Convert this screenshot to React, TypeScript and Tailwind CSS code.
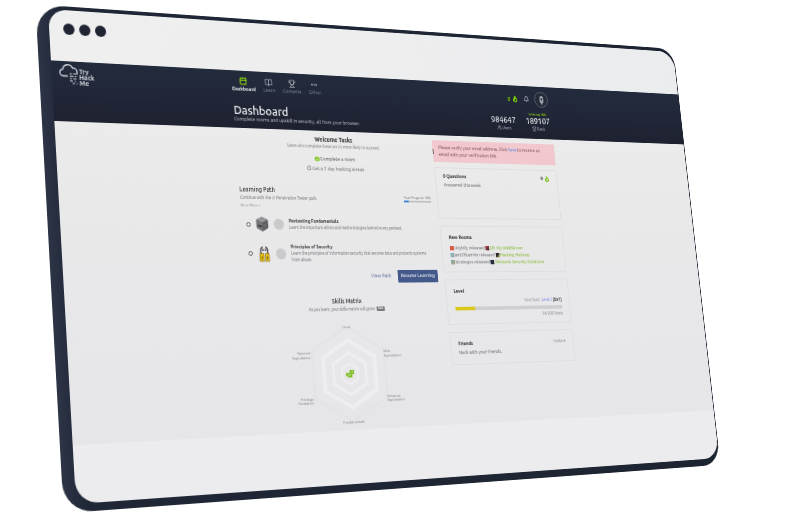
import { useLayoutEffect, useRef, useState } from "react";
import type { ReactNode } from "react";
import { Bell, BookOpen, Check, Clock, Ellipsis, Flame, PanelTop, Trophy, Users } from "lucide-react";

type Point = [number, number];

const CANVAS_WIDTH = 808;
const PLANE_WIDTH = 800;
const PLANE_HEIGHT = 500;

// Where the four corners of the tilted screen land, clockwise from top left.
const CORNERS: Point[] = [
  [48, 9],
  [673, 52],
  [719, 458],
  [76, 504],
];

// Perspective matrix that lays the flat screen onto the four corners.
function tilt(scale: number): string {
  const [[x0, y0], [x1, y1], [x2, y2], [x3, y3]] = CORNERS.map(
    ([x, y]) => [x * scale, y * scale] as Point,
  );
  const dx1 = x1 - x2;
  const dx2 = x3 - x2;
  const sx = x0 - x1 + x2 - x3;
  const dy1 = y1 - y2;
  const dy2 = y3 - y2;
  const sy = y0 - y1 + y2 - y3;
  const den = dx1 * dy2 - dx2 * dy1;
  const g = (sx * dy2 - dx2 * sy) / den;
  const h = (dx1 * sy - sx * dy1) / den;
  const w = PLANE_WIDTH;
  const t = PLANE_HEIGHT;
  const m = [
    (x1 - x0 + g * x1) / w, (y1 - y0 + g * y1) / w, 0, g / w,
    (x3 - x0 + h * x3) / t, (y3 - y0 + h * y3) / t, 0, h / t,
    0, 0, 1, 0,
    x0, y0, 0, 1,
  ];
  return `matrix3d(${m.map((n) => n.toFixed(9)).join(",")})`;
}

function Logo() {
  return (
    <a href="#home" className="flex items-end text-[#d5d9e0]" aria-label="Try Hack Me">
      <svg viewBox="0 0 44 44" className="-mr-0.5 h-11 w-11" fill="none" stroke="currentColor">
        <path d="M17 25H9a7 7 0 0 1-1-14 11 11 0 0 1 21-3 8 8 0 0 1 9 9v3" strokeWidth="2.6" strokeLinecap="round" />
        <path d="M22 20h5m3 0h6M22 25h8m3 0h3M22 30h4m3 0h7M22 35h6m4 0h2M27 40h5m3 0h2" strokeWidth="2.4" />
      </svg>
      <span className="flex flex-col text-[14px] leading-[12px] font-semibold">
        <span>Try</span>
        <span>Hack</span>
        <span>Me</span>
      </span>
    </a>
  );
}

function NavItem({ icon, label, active }: { icon: ReactNode; label: string; active?: boolean }) {
  return (
    <a
      href="#nav"
      className={
        active
          ? "flex flex-col items-center gap-0.5 font-semibold text-[#e6e8ec]"
          : "flex flex-col items-center gap-0.5 text-[#858b98]"
      }
    >
      {icon}
      <span className="text-[11px] leading-[14px]">{label}</span>
    </a>
  );
}

function Header() {
  return (
    <header className="bg-linear-to-b from-[#222b3c] via-[#212738] to-[#1e2130] text-white">
      <div className="relative pl-3">
        <div className="absolute top-1.5 left-4">
          <Logo />
        </div>
        <div className="mx-auto flex h-16 max-w-[816px] items-center justify-between">
          <nav className="flex gap-[18px]">
            <NavItem active label="Dashboard" icon={<PanelTop className="size-[18px] text-[#88cc14]" strokeWidth={3} />} />
            <NavItem label="Learn" icon={<BookOpen className="size-[18px] text-[#b3b8c2]" />} />
            <NavItem label="Compete" icon={<Trophy className="size-[18px] text-[#b3b8c2]" />} />
            <NavItem label="Other" icon={<Ellipsis className="size-[18px] text-[#b3b8c2]" strokeWidth={3} />} />
          </nav>
          <div className="flex items-center gap-4 pr-1">
            <span className="flex items-center gap-1 text-sm font-medium text-[#88e000]">
              0 <Flame className="size-4" strokeWidth={4} />
            </span>
            <button type="button" aria-label="Notifications">
              <Bell className="size-[15px] text-[#c3c7cf]" />
            </button>
            <button
              type="button"
              aria-label="Profile"
              className="flex size-[38px] items-center justify-center rounded-full border-2 border-[#5c6370] bg-[#252b39]"
            >
              <svg viewBox="0 0 20 24" className="h-6 w-5">
                <path d="M5 8a5 6 0 0 1 10 0v8a5 5 0 0 1-3 4v3H9v-3a5 5 0 0 1-4-4z" fill="#a9adb5" />
                <path d="M8 8h4v4H8zM9 15h4" fill="#2b303c" stroke="#2b303c" />
              </svg>
            </button>
          </div>
        </div>
      </div>
      <div className="pl-3">
        <div className="mx-auto flex h-[63px] max-w-[816px] justify-between">
          <div className="pt-2">
            <h1 className="text-[26px] leading-[28px] font-medium text-[#eef0f3]">Dashboard</h1>
            <p className="text-[11px] leading-[14px] text-[#c3c6ce]">
              Complete rooms and upskill in security, all from your browser.
            </p>
          </div>
          <div className="flex gap-7 pr-1 text-center">
            <div className="pt-2">
              <div className="text-[20px] leading-[22px] font-medium text-[#e6e8ec]">984647</div>
              <div className="flex items-center justify-center gap-0.5 text-[10px] leading-[18px] text-[#b3b8c2]">
                <Users className="size-3" /> Users
              </div>
            </div>
            <div>
              <div className="text-[7px] leading-[8px] font-semibold text-[#88cc14]">In the top 18%</div>
              <div className="text-[20px] leading-[22px] font-medium text-[#e6e8ec]">189107</div>
              <div className="flex items-center justify-center gap-0.5 text-[10px] leading-[18px] text-[#b3b8c2]">
                <Trophy className="size-3" /> Rank
              </div>
            </div>
          </div>
        </div>
      </div>
    </header>
  );
}

function WelcomeTasks() {
  return (
    <section className="flex flex-col items-center">
      <h2 className="text-[13px] leading-4 font-semibold text-[#202024]">Welcome Tasks</h2>
      <p className="text-[9px] leading-4 text-[#77777c]">Users who complete these are 2x more likely to succeed.</p>
      <p className="mt-3 flex items-center gap-0.5 text-[11px] leading-[14px] text-[#48484d]">
        <span className="flex size-[11px] items-center justify-center rounded-full bg-[#7cc51c]">
          <Check className="size-2 text-white" strokeWidth={4} />
        </span>
        Complete a room
      </p>
      <p className="mt-[7px] flex items-center gap-0.5 text-[11px] leading-[14px] text-[#66666b]">
        <Clock className="size-[11px]" /> Get a 2 day hacking streak
      </p>
    </section>
  );
}

function Cube() {
  return (
    <svg viewBox="0 0 30 32" className="h-8 w-[30px]">
      <path d="M15 1 28 7 15 13 2 7z" fill="#98989c" />
      <path d="M2 7 15 13V31L2 24z" fill="#77777b" />
      <path d="M28 7 15 13V31L28 24z" fill="#616165" />
      <path d="M15 1 28 7V24L15 31 2 24V7zM2 7l13 6 13-6M15 13v18" fill="none" stroke="#4b4b50" />
      <path d="M5 15v7l2-3 2 5v-7l-2 2zM10 18l3 1v4l-3-1z" fill="#29292d" />
      <path d="M18 18l3-1v3M22 22l3-2" fill="none" stroke="#86868a" />
    </svg>
  );
}

function Padlocks() {
  return (
    <svg viewBox="0 0 30 36" className="h-9 w-[30px]">
      <path d="M7 20V9q1-5 5-6M23 20V9q-1-5-5-6M12 12V7M18 12V7" fill="none" stroke="#4a4a4e" strokeWidth="3" />
      <path d="M4 17h10v17H4zM17 17h9v17h-9z" fill="#e4bd16" stroke="#6e5c1b" />
      <path d="M9 23v6M21 23v6" stroke="#54481e" strokeWidth="2" />
    </svg>
  );
}

function PathStep({ icon, title, children }: { icon: ReactNode; title: string; children: ReactNode }) {
  return (
    <li className="flex items-center gap-3 pl-2.5">
      <span className="size-2.5 shrink-0 rounded-full border border-[#5b5b60]" />
      <span className="flex h-8 shrink-0 items-center">{icon}</span>
      <span className="size-6 shrink-0 rounded-full bg-[#c9cacc]" />
      <div className="pr-5 leading-[14px]">
        <h3 className="text-[10px] font-semibold text-[#303034]">{title}</h3>
        <p className="text-[9px] text-[#69696e]">{children}</p>
      </div>
    </li>
  );
}

function LearningPath() {
  return (
    <section className="mt-[34px]">
      <div className="flex items-start justify-between">
        <div>
          <h2 className="text-[13px] leading-4 font-medium text-[#2b2b2f]">Learning Path</h2>
          <p className="text-[9px] leading-5 text-[#69696e]">Continue with the Jr Penetration Tester path.</p>
          <a href="#more" className="block text-[8px] leading-[10px] text-[#85858a]">
            Show More &gt;
          </a>
        </div>
        <div className="pt-3.5">
          <div className="text-[8px] leading-[12px] text-[#5e5e63]">Your Progress: 18%</div>
          <div className="h-[5px] bg-[#bfc1c6]">
            <div className="h-full w-1/6 bg-[#2b7de0]" />
          </div>
        </div>
      </div>
      <ul className="mt-[21px] flex flex-col gap-[26px]">
        <PathStep icon={<Cube />} title="Pentesting Fundamentals">
          Learn the important ethics and methodologies behind every pentest.
        </PathStep>
        <PathStep icon={<Padlocks />} title="Principles of Security">
          Learn the principles of information security that secures data and protects systems from abuse.
        </PathStep>
      </ul>
      <div className="mt-[15px] flex items-center justify-end gap-4">
        <a href="#path" className="text-[11px] text-[#4c6191]">
          View Path
        </a>
        <button type="button" className="h-7 rounded-xs bg-[#43598a] px-2 text-[11px] font-medium text-[#e6e9f0]">
          Resume Learning
        </button>
      </div>
    </section>
  );
}

function SkillsMatrix() {
  return (
    <section className="mt-8 flex flex-col items-center">
      <h2 className="text-[13px] leading-4 font-medium text-[#202024]">Skills Matrix</h2>
      <p className="flex items-center gap-1 text-[9px] leading-5 text-[#69696e]">
        As you learn, your skills matrix will grow
        <span className="rounded-xs bg-[#77777c] px-1 text-[7px] leading-[10px] font-bold text-[#ededee]">Info</span>
      </p>
      <svg viewBox="-30 0 300 224" className="mt-[18px] mr-3 h-[224px] w-[300px]" fontSize="8" fill="#77777c">
        <g fill="none" stroke="#eeedef" strokeWidth="9">
          <path d="M120 9 207 59V161L120 211 33 161V59z" stroke="#e4e3e5" strokeWidth="6" />
          <path d="M120 38 182 74V146L120 182 58 146V74z" />
          <path d="M120 65 159 88V132L120 155 81 132V88z" strokeWidth="7" />
          <path d="M120 88 139 99V121L120 132 101 121V99z" strokeWidth="5" />
        </g>
        <path d="M112 108h7v-6h11v9h-5v7h-11v-3h-4v-7z" fill="#83bf2d" />
        <path d="M115 112h6m3-6h3" stroke="#dff0c2" strokeWidth="2" />
        <text x="120" y="12" textAnchor="middle">Linux</text>
        <text x="206" y="67">Web</text>
        <text x="206" y="76">Exploitation</text>
        <text x="206" y="164">Windows</text>
        <text x="206" y="173">Exploitation</text>
        <text x="120" y="216" textAnchor="middle">Fundamentals</text>
        <text x="29" y="164" textAnchor="end">Privilege</text>
        <text x="29" y="173" textAnchor="end">Escalation</text>
        <text x="29" y="67" textAnchor="end">Network</text>
        <text x="29" y="76" textAnchor="end">Exploitation</text>
      </svg>
    </section>
  );
}

function Alert() {
  return (
    <div className="relative bg-[#f1c8ce] px-4 py-2.5 text-[11px] leading-[15px] text-[#77434c]">
      <span className="absolute top-5 left-0 h-3 w-0.5 bg-[#54333b]" />
      Please verify your email address. Click{" "}
      <a href="#verify" className="text-[#3f83ee]">
        here
      </a>{" "}
      to receive an
      <br />
      email with your verification link.
    </div>
  );
}

function NewRoom({ user, room, from, to }: { user: string; room: string; from: string; to: string }) {
  return (
    <li className="flex items-center gap-0.5">
      <span className={"size-2.5 " + from} />
      <span>{user} released</span>
      <span className={"size-2.5 " + to} />
      <a href="#room" className="text-[#79b51c]">
        {room}
      </a>
    </li>
  );
}

function Sidebar() {
  const card = "rounded-xs border border-[#dedee0] px-5";
  const title = "text-[11px] leading-4 font-semibold text-[#252529]";
  return (
    <aside className="w-[333px] pt-3">
      <Alert />
      <div className="mt-3 flex flex-col gap-[17px]">
        <section className={card + " h-[117px] pt-2.5"}>
          <div className="flex items-center justify-between">
            <h2 className={title}>0 Questions</h2>
            <span className="flex items-center gap-1 text-[12px] leading-4 font-semibold text-[#252529]">
              0 <Flame className="size-3.5 text-[#7cc51c]" strokeWidth={4} />
            </span>
          </div>
          <p className="mt-1 text-[11px] leading-4 text-[#5b5b60]">Answered this week</p>
        </section>
        <section className={card + " h-[105px] pt-4"}>
          <h2 className={title}>New Rooms</h2>
          <ul className="mt-2 text-[11px] leading-4 text-[#66666b]">
            <NewRoom user="tinyb0y" room="Oh My WebServer" from="bg-[#d8573f]" to="bg-linear-to-br from-[#cf3048] to-[#2b2530]" />
            <NewRoom user="am03bam4n" room="Hacking Hadoop" from="bg-[#92afb4]" to="bg-linear-to-br from-[#252529] from-40% to-[#cdbc2f]" />
            <NewRoom user="strategos" room="Network Security Solutions" from="bg-linear-to-br from-[#6eafae] to-[#b99c79]" to="bg-[#25293a]" />
          </ul>
        </section>
        <section className={card + " h-[101px] pt-4"}>
          <h2 className={title}>Level</h2>
          <p className="mt-1.5 text-right text-[9px] leading-4 text-[#939398]">
            Next Rank :{" "}
            <a href="#level" className="text-[#7477ee]">
              Level 2
            </a>{" "}
            <b className="text-[10px] text-[#303034]">[0x1]</b>
          </p>
          <div className="mt-1 h-2 bg-[#cdcfd2]">
            <div className="h-full w-[18%] bg-[#dac81c]" />
          </div>
          <p className="mt-1 text-right text-[9px] leading-4 text-[#85858a]">94/500 Points</p>
        </section>
        <section className={card + " h-[74px] pt-4"}>
          <div className="flex items-center justify-between">
            <h2 className={title}>Friends</h2>
            <button type="button" className="text-[10px] leading-4 text-[#85858a]">
              Invite ▾
            </button>
          </div>
          <p className="mt-1 text-[11px] leading-4 text-[#5b5b60]">Hack with your friends.</p>
        </section>
      </div>
    </aside>
  );
}

function Screen() {
  return (
    <div className="h-[1000px] overflow-hidden rounded-tl-[40px] rounded-tr-[46px] rounded-br-[44px] rounded-bl-[46px] bg-[#ecebed]">
      <div className="flex h-[107px] gap-2.5 bg-linear-to-r from-[#efefef] to-[#ebecee] pt-7 pl-[30px]">
        <span className="size-6 rounded-full bg-[#202433]" />
        <span className="size-6 rounded-full bg-[#202433]" />
        <span className="size-6 rounded-full bg-[#202433]" />
      </div>
      <Header />
      <div className="bg-linear-to-b from-[#eaebea] via-[#e8e7e9] to-[#e6e5e7] pl-3">
        <div className="mx-auto flex max-w-[816px] gap-[15px] pb-1.5">
          <main className="flex-1 pt-3">
            <WelcomeTasks />
            <LearningPath />
            <SkillsMatrix />
          </main>
          <Sidebar />
        </div>
      </div>
    </div>
  );
}

export default function App() {
  const stage = useRef<HTMLDivElement>(null);
  const [scale, setScale] = useState(1);

  useLayoutEffect(() => {
    const node = stage.current;
    if (!node) return;
    const measure = () => setScale(node.clientWidth / CANVAS_WIDTH);
    measure();
    const observer = new ResizeObserver(measure);
    observer.observe(node);
    return () => observer.disconnect();
  }, []);

  return (
    <div
      ref={stage}
      className="aspect-[808/517] w-full overflow-hidden bg-white font-['Ubuntu','Noto_Sans',sans-serif]"
    >
      <div className="flow-root w-[800px] origin-top-left" style={{ transform: tilt(scale) }}>
        <div className="flow-root [zoom:0.5]">
          <div className="-mt-2 -mr-0.5 -ml-[27px] rounded-tl-[62px] rounded-tr-[48px] rounded-br-[52px] rounded-bl-[60px] bg-linear-to-r from-[#2d3446] via-[#1f2636] via-3% to-[#1d2431] pt-2 pr-0.5 pb-4 pl-[27px] shadow-[0_0_4px_8px_white]">
            <Screen />
          </div>
        </div>
      </div>
    </div>
  );
}
